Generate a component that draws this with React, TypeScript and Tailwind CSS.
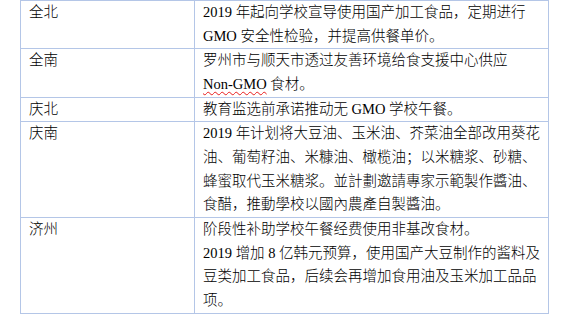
export default function App() {
  const rows: { region: string; lines: React.ReactNode[] }[] = [
    {
      region: "全北",
      lines: [
        "2019 年起向学校宣导使用国产加工食品，定期进行",
        "GMO 安全性检验，并提高供餐单价。",
      ],
    },
    {
      region: "全南",
      lines: [
        "罗州市与顺天市透过友善环境给食支援中心供应",
        <>
          <span className="underline decoration-wavy decoration-[#e81c1c] decoration-1 underline-offset-2">
            Non-GMO
          </span>{" "}
          食材。
        </>,
      ],
    },
    {
      region: "庆北",
      lines: ["教育监选前承诺推动无 GMO 学校午餐。"],
    },
    {
      region: "庆南",
      lines: [
        "2019 年计划将大豆油、玉米油、芥菜油全部改用葵花",
        "油、葡萄籽油、米糠油、橄榄油；以米糖浆、砂糖、",
        "蜂蜜取代玉米糖浆。並計劃邀請專家示範製作醬油、",
        "食醋，推動學校以國內農產自製醬油。",
      ],
    },
    {
      region: "济州",
      lines: [
        "阶段性补助学校午餐经费使用非基改食材。",
        "2019 增加 8 亿韩元预算，使用国产大豆制作的酱料及",
        "豆类加工食品，后续会再增加食用油及玉米加工品品",
        "项。",
      ],
    },
  ];

  return (
    <div
      className="relative w-[569px] h-[315px] bg-white overflow-hidden text-black"
      style={{ fontFamily: '"Liberation Serif", "Noto Sans CJK SC", serif' }}
    >
      <table className="ml-[20px] border-collapse text-[14.5px] leading-[23.65px] font-light">
        <tbody>
          {rows.map((r) => (
            <tr key={r.region}>
              <td className="w-[174px] border border-[#b4c6e7] pl-2 align-top whitespace-nowrap">
                {r.region}
              </td>
              <td className="w-[354px] border border-[#b4c6e7] pl-2 align-top whitespace-nowrap">
                {r.lines.map((l, i) => (
                  <div key={i}>{l}</div>
                ))}
              </td>
            </tr>
          ))}
        </tbody>
      </table>
      <div className="ml-[266px] mt-[1px] w-[301px] h-px bg-[#d9d9d9]" />
    </div>
  );
}
